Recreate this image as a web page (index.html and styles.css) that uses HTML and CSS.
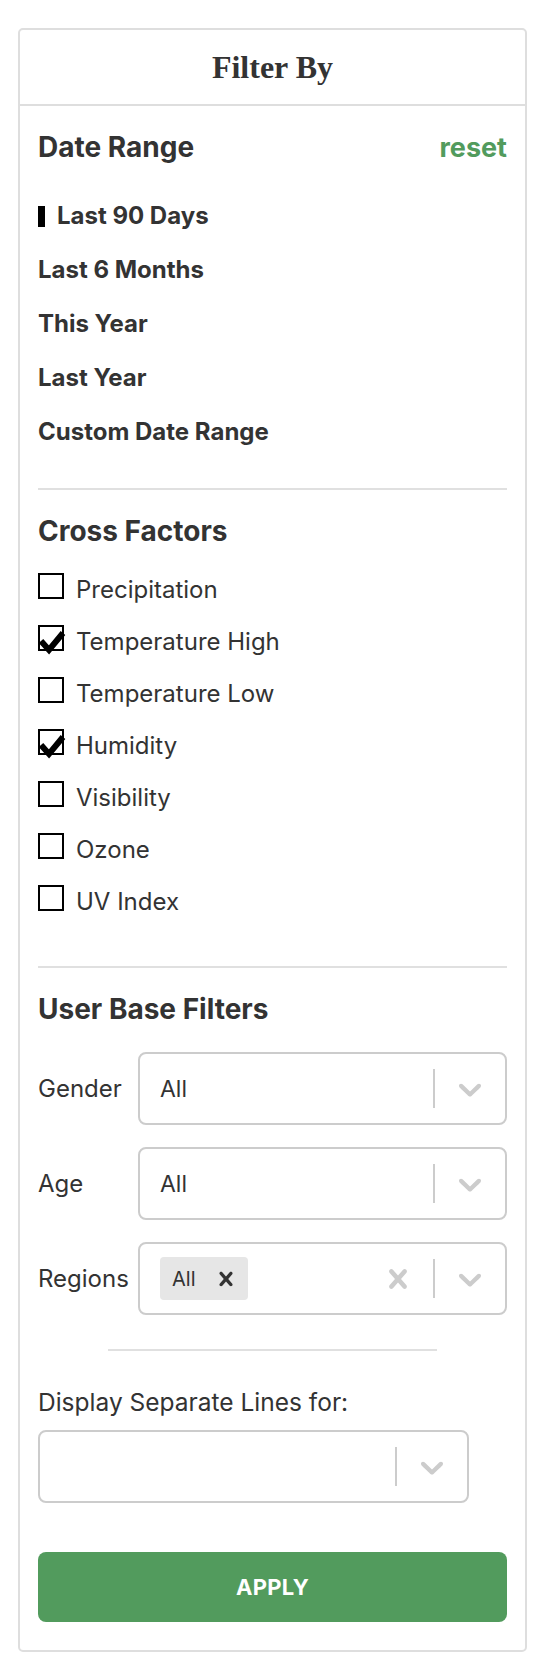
FILE: index.html
```html
<!DOCTYPE html>
<html>
<head>
<meta charset="utf-8">
<link rel="stylesheet" href="styles.css">
</head>
<body>
<div class="card">
  <div class="card-header"><h1 class="card-title">Filter By</h1></div>
  <div class="card-body">
    <div class="section-head"><span>Date Range</span><span class="reset">reset</span></div>
    <ul class="date-list">
      <li class="active">Last 90 Days</li>
      <li>Last 6 Months</li>
      <li>This Year</li>
      <li>Last Year</li>
      <li>Custom Date Range</li>
    </ul>
    <div class="divider"></div>
    <div class="section-head"><span>Cross Factors</span></div>
    <ul class="check-list">
      <li><span class="box"></span>Precipitation</li>
      <li><span class="box checked"><svg class="tick" viewBox="0 0 30 32" width="30" height="32"><polyline points="3,16 11,25 25,8" fill="none" stroke="#000" stroke-width="6"/></svg></span>Temperature High</li>
      <li><span class="box"></span>Temperature Low</li>
      <li><span class="box checked"><svg class="tick" viewBox="0 0 30 32" width="30" height="32"><polyline points="3,16 11,25 25,8" fill="none" stroke="#000" stroke-width="6"/></svg></span>Humidity</li>
      <li><span class="box"></span>Visibility</li>
      <li><span class="box"></span>Ozone</li>
      <li><span class="box"></span>UV Index</li>
    </ul>
    <div class="divider divider-lg"></div>
    <div class="section-head"><span>User Base Filters</span></div>
    <div class="form-grid">
      <span class="label">Gender</span>
      <div class="select">
        <div class="select-value">All</div>
        <span class="sep"></span>
        <span class="ind"><svg viewBox="0 0 20 20" width="38" height="38"><path d="M4.516 7.548c0.436-0.446 1.043-0.481 1.576 0l3.908 3.747 3.908-3.747c0.533-0.481 1.141-0.446 1.574 0 0.436 0.445 0.408 1.197 0 1.615-0.406 0.418-4.695 4.502-4.695 4.502-0.217 0.223-0.502 0.335-0.787 0.335s-0.57-0.112-0.789-0.335c0 0-4.287-4.084-4.695-4.502s-0.436-1.17 0-1.615z"/></svg></span>
      </div>
      <span class="label">Age</span>
      <div class="select">
        <div class="select-value">All</div>
        <span class="sep"></span>
        <span class="ind"><svg viewBox="0 0 20 20" width="38" height="38"><path d="M4.516 7.548c0.436-0.446 1.043-0.481 1.576 0l3.908 3.747 3.908-3.747c0.533-0.481 1.141-0.446 1.574 0 0.436 0.445 0.408 1.197 0 1.615-0.406 0.418-4.695 4.502-4.695 4.502-0.217 0.223-0.502 0.335-0.787 0.335s-0.57-0.112-0.789-0.335c0 0-4.287-4.084-4.695-4.502s-0.436-1.17 0-1.615z"/></svg></span>
      </div>
      <span class="label">Regions</span>
      <div class="select">
        <div class="select-value">
          <span class="tag"><span class="tag-label">All</span><svg class="tag-x" viewBox="0 0 20 20" width="28" height="28"><path d="M14.348 14.849c-0.469 0.469-1.229 0.469-1.697 0l-2.651-3.030-2.651 3.029c-0.469 0.469-1.229 0.469-1.697 0-0.469-0.469-0.469-1.229 0-1.697l2.758-3.15-2.759-3.152c-0.469-0.469-0.469-1.228 0-1.697s1.228-0.469 1.697 0l2.652 3.031 2.651-3.031c0.469-0.469 1.228-0.469 1.697 0s0.469 1.229 0 1.697l-2.758 3.152 2.758 3.15c0.469 0.469 0.469 1.229 0 1.698z"/></svg></span>
        </div>
        <span class="ind"><svg viewBox="0 0 20 20" width="38" height="38"><path d="M14.348 14.849c-0.469 0.469-1.229 0.469-1.697 0l-2.651-3.030-2.651 3.029c-0.469 0.469-1.229 0.469-1.697 0-0.469-0.469-0.469-1.229 0-1.697l2.758-3.15-2.759-3.152c-0.469-0.469-0.469-1.228 0-1.697s1.228-0.469 1.697 0l2.652 3.031 2.651-3.031c0.469-0.469 1.228-0.469 1.697 0s0.469 1.229 0 1.697l-2.758 3.152 2.758 3.15c0.469 0.469 0.469 1.229 0 1.698z"/></svg></span>
        <span class="sep"></span>
        <span class="ind"><svg viewBox="0 0 20 20" width="38" height="38"><path d="M4.516 7.548c0.436-0.446 1.043-0.481 1.576 0l3.908 3.747 3.908-3.747c0.533-0.481 1.141-0.446 1.574 0 0.436 0.445 0.408 1.197 0 1.615-0.406 0.418-4.695 4.502-4.695 4.502-0.217 0.223-0.502 0.335-0.787 0.335s-0.57-0.112-0.789-0.335c0 0-4.287-4.084-4.695-4.502s-0.436-1.17 0-1.615z"/></svg></span>
      </div>
    </div>
    <div class="hr-short"></div>
    <div class="display-label">Display Separate Lines for:</div>
    <div class="select select-narrow">
      <div class="select-value"></div>
      <span class="sep"></span>
      <span class="ind"><svg viewBox="0 0 20 20" width="38" height="38"><path d="M4.516 7.548c0.436-0.446 1.043-0.481 1.576 0l3.908 3.747 3.908-3.747c0.533-0.481 1.141-0.446 1.574 0 0.436 0.445 0.408 1.197 0 1.615-0.406 0.418-4.695 4.502-4.695 4.502-0.217 0.223-0.502 0.335-0.787 0.335s-0.57-0.112-0.789-0.335c0 0-4.287-4.084-4.695-4.502s-0.436-1.17 0-1.615z"/></svg></span>
    </div>
    <button class="apply">APPLY</button>
  </div>
</div>
</body>
</html>
```
FILE: styles.css
```css
* { box-sizing: border-box; }
body {
  margin: 0;
  font-family: Inter, "Noto Sans", sans-serif;
  color: #333;
  background: #fff;
}
.card {
  width: 509px;
  margin: 28px 0 16px 18px;
  border: 2px solid #dedede;
  border-radius: 5px;
}
.card-header {
  height: 76px;
  border-bottom: 2px solid #dedede;
  display: flex;
  align-items: center;
  justify-content: center;
}
.card-title {
  margin: 0;
  font-family: "Liberation Serif", serif;
  font-size: 32px;
  font-weight: 700;
  color: #333;
}
.card-body {
  padding: 24px 18px 28px;
}
.section-head {
  display: flex;
  justify-content: space-between;
  align-items: center;
  height: 34px;
  font-size: 28px;
  font-weight: 700;
  color: #333;
}
.reset { color: #529b5d; font-size: 27px; }
.date-list {
  list-style: none;
  margin: 25px 0 0;
  padding: 0;
}
.date-list li {
  height: 54px;
  line-height: 54px;
  font-size: 24px;
  font-weight: 700;
  display: flex;
  align-items: center;
}
.date-list li.active::before {
  content: "";
  display: block;
  width: 7px;
  height: 21px;
  background: #000;
  margin-right: 12px;
}
.divider {
  height: 2px;
  background: #e0e0e0;
  margin: 29px 0 24px;
}
.divider-lg { margin-top: 39px; }
.check-list {
  list-style: none;
  margin: 15px 0 0;
  padding: 0;
}
.check-list li {
  height: 52px;
  display: flex;
  align-items: center;
  font-size: 24px;
  color: #333;
}
.box {
  position: relative;
  width: 26px;
  height: 26px;
  border: 2px solid #000;
  margin-right: 12px;
  margin-bottom: 6px;
  flex: none;
}
.tick {
  position: absolute;
  left: -2px;
  top: -2px;
  overflow: visible;
}
.form-grid {
  margin-top: 26px;
  display: grid;
  grid-template-columns: 92px 1fr;
  column-gap: 8px;
  row-gap: 22px;
  align-items: center;
}
.label {
  font-size: 24px;
  color: #333;
}
.select {
  display: flex;
  align-items: center;
  height: 73px;
  border: 2px solid #ccc;
  border-radius: 8px;
  background: #fff;
}
.select-value {
  flex: 1;
  display: flex;
  align-items: center;
  padding: 0 15px 0 20px;
  font-size: 23px;
  color: #333;
}
.sep {
  align-self: stretch;
  width: 2px;
  margin: 15px 0;
  background: #ccc;
}
.ind {
  display: flex;
  padding: 0 16px;
  fill: #ccc;
}
.tag {
  display: flex;
  align-items: center;
  height: 43px;
  background: #e6e6e6;
  border-radius: 4px;
  padding-right: 8px;
}
.tag-label {
  padding: 0 16px 0 12px;
  font-size: 20px;
  color: #333;
}
.tag-x { fill: #333; }
.hr-short {
  width: 70%;
  height: 2px;
  background: #e0e0e0;
  margin: 34px auto 0;
}
.display-label {
  margin-top: 34px;
  height: 34px;
  line-height: 34px;
  font-size: 24.5px;
  color: #333;
}
.select-narrow {
  width: 431px;
  margin-top: 11px;
}
.apply {
  display: block;
  width: 100%;
  height: 70px;
  margin-top: 49px;
  border: none;
  border-radius: 8px;
  background: #529b5d;
  color: #fff;
  font-family: Inter, "Noto Sans", sans-serif;
  font-size: 22px;
  font-weight: 700;
  letter-spacing: 0.3px;
}
```
